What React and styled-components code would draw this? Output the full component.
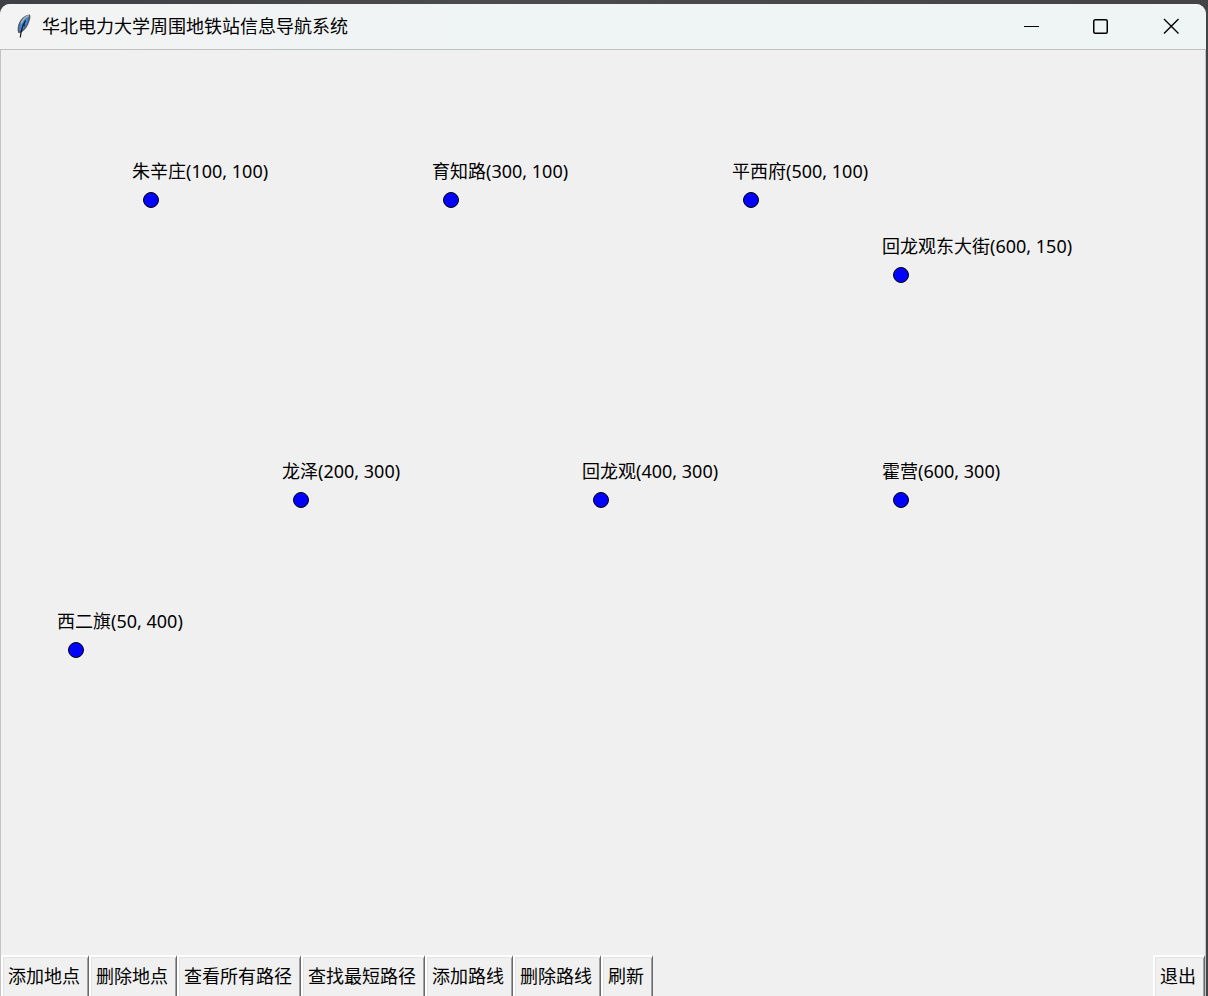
import React from "react";
import styled, { createGlobalStyle } from "styled-components";

const GlobalStyle = createGlobalStyle`
  * { box-sizing: border-box; }
  html, body { margin: 0; padding: 0; }
  body {
    background: #434547;
    color: #000;
    font-family: "Noto Sans", "Noto Sans CJK SC", sans-serif;
    font-size: 18px;
  }
`;

const Desktop = styled.div`
  display: flex;
  min-height: 100vh;
  padding: 4px 2px 0 0;
  background: linear-gradient(90deg, #3e4043, #4b4b4d 40%, #424446);
`;

const Window = styled.main`
  flex: 1;
  display: flex;
  flex-direction: column;
  min-width: 0;
  background: #f0f0f0;
  border-radius: 10px 10px 0 0;
  overflow: hidden;
`;

const TitleBar = styled.header`
  display: flex;
  align-items: center;
  height: 46px;
  padding: 0 0 2px 16px;
  gap: 10px;
  background: linear-gradient(90deg, #f3f3f3, #eff4f5 40%);
  border-bottom: 1px solid #bfc0c0;
`;

const Title = styled.h1`
  flex: 1;
  margin: 0;
  padding-bottom: 2px;
  font-family: "Noto Sans CJK SC", sans-serif;
  font-size: 18px;
  font-weight: 400;
  line-height: 24px;
  white-space: nowrap;
`;

const Caption = styled.div`
  display: flex;
  align-self: stretch;
`;

const CaptionButton = styled.button`
  display: grid;
  place-items: center;
  width: 70px;
  padding: 0;
  border: 0;
  background: transparent;
`;

const Canvas = styled.section`
  position: relative;
  flex: 1;
  border: 1px solid #c4c4c4;
  border-width: 0 1px;
`;

const Station = styled.div`
  position: absolute;
  left: ${(p) => p.$x}px;
  top: ${(p) => p.$y}px;
`;

const Dot = styled.span`
  position: absolute;
  left: -8px;
  top: -8px;
  width: 16px;
  height: 16px;
  border: 1px solid #000;
  border-radius: 50%;
  background: #00f;
`;

const StationLabel = styled.span`
  position: absolute;
  left: -19px;
  top: -41px;
  line-height: 24px;
  white-space: nowrap;
`;

const ToolBar = styled.footer`
  display: flex;
  height: 41px;
  border: 1px solid #c4c4c4;
  border-width: 0 1px;
`;

const ToolButton = styled.button`
  height: 41px;
  margin: 0 0 0 ${(p) => (p.$last ? "auto" : "0")};
  padding: 0 8px 1px 5px;
  border: solid;
  border-width: 2px 1px 0 2px;
  border-color: #fff #696969 #696969 #fff;
  background: #f0f0f0;
  box-shadow: inset 1px 1px #e3e3e3, inset -1px 0 #a0a0a0;
  color: #000;
  font: inherit;
  line-height: 24px;
  white-space: nowrap;
`;

const SCALE = 1.5;

const stations = [
  ["朱辛庄", 100, 100],
  ["育知路", 300, 100],
  ["平西府", 500, 100],
  ["回龙观东大街", 600, 150],
  ["龙泽", 200, 300],
  ["回龙观", 400, 300],
  ["霍营", 600, 300],
  ["西二旗", 50, 400],
];

const actions = ["添加地点", "删除地点", "查看所有路径", "查找最短路径", "添加路线", "删除路线", "刷新"];

const Feather = () => (
  <svg width="16" height="24" viewBox="0 0 16 24" aria-hidden="true">
    <path d="M13.8.5C9.5.8 5.2 4 3.2 8.6c-1.6 3.4-2 7.2-1 10.4l2.8-.2c4.4-2.5 7-6.8 8.4-11.5C14.6 4.4 14.8 2 13.8.5Z" fill="#55585c" />
    <path d="M12.9 2C9 3 5.4 6.5 3.9 10.2c-1 2.6-.8 5.4-.5 7.4 4-1.6 7-5.5 8.4-9.9Z" fill="#3f86d8" />
    <path d="M12.8 1.6C9.4 3 6.6 6 5.2 9.4" stroke="#a9b4be" strokeWidth="1.6" fill="none" />
    <path d="M9.5 6.5C7.4 10 5.2 14.5 4.3 23.5" stroke="#101316" strokeWidth="1.2" fill="none" />
    <path d="M8.8 9.5l-.5 3" stroke="#1d3452" fill="none" />
  </svg>
);

const Glyph = ({ children }) => (
  <svg width="16" height="16" viewBox="0 0 16 16" fill="none" stroke="#000" aria-hidden="true">
    {children}
  </svg>
);

export default function App() {
  return (
    <>
      <GlobalStyle />
      <Desktop>
        <Window>
          <TitleBar>
            <Feather />
            <Title>华北电力大学周围地铁站信息导航系统</Title>
            <Caption>
              <CaptionButton aria-label="最小化">
                <Glyph><path d="M1 8.5h15" /></Glyph>
              </CaptionButton>
              <CaptionButton aria-label="最大化">
                <Glyph><rect x=".75" y="1.75" width="13.5" height="13.5" rx="1.5" strokeWidth="1.5" /></Glyph>
              </CaptionButton>
              <CaptionButton aria-label="关闭">
                <Glyph><path d="M1 1l14.5 14.5M15.5 1L1 15.5" strokeWidth="1.4" /></Glyph>
              </CaptionButton>
            </Caption>
          </TitleBar>
          <Canvas aria-label="地铁站">
            {stations.map(([name, x, y]) => (
              <Station key={name} $x={x * SCALE} $y={y * SCALE}>
                <StationLabel>{`${name}(${x}, ${y})`}</StationLabel>
                <Dot />
              </Station>
            ))}
          </Canvas>
          <ToolBar>
            {actions.map((label) => (
              <ToolButton key={label}>{label}</ToolButton>
            ))}
            <ToolButton $last>退出</ToolButton>
          </ToolBar>
        </Window>
      </Desktop>
    </>
  );
}
